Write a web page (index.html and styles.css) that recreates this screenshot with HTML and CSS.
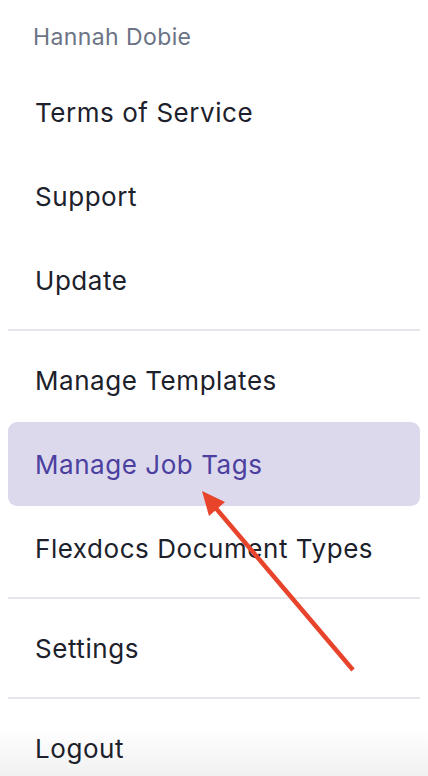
FILE: index.html
```html
<!DOCTYPE html>
<html>
<head>
<meta charset="utf-8">
<link rel="stylesheet" href="styles.css">
</head>
<body>
<nav class="menu">
  <div class="user">Hannah Dobie</div>
  <a class="item">Terms of Service</a>
  <a class="item">Support</a>
  <a class="item">Update</a>
  <hr class="sep">
  <a class="item">Manage Templates</a>
  <a class="item active">Manage Job Tags</a>
  <a class="item">Flexdocs Document Types</a>
  <hr class="sep">
  <a class="item">Settings</a>
  <hr class="sep">
  <a class="item">Logout</a>
</nav>
<svg class="arrow" width="428" height="776" viewBox="0 0 428 776">
  <line x1="353" y1="670" x2="214" y2="506" stroke="#e8432b" stroke-width="4.5" stroke-linecap="butt"/>
  <polygon points="202,491 225,502 209,516" fill="#e8432b"/>
</svg>
</body>
</html>
```
FILE: styles.css
```css
html, body {
  margin: 0;
  padding: 0;
  width: 428px;
  height: 776px;
  overflow: hidden;
}
body {
  font-family: Inter, "Noto Sans", sans-serif;
  position: relative;
  background: linear-gradient(to bottom, #ffffff 0px, #ffffff 728px, #f1f1f1 776px);
}
.menu {
  display: flex;
  flex-direction: column;
  padding: 0 8px;
}
.user {
  height: 70px;
  display: flex;
  align-items: center;
  padding-left: 25px;
  padding-top: 4px;
  box-sizing: border-box;
  font-size: 23px;
  color: #6b7385;
  letter-spacing: 0.4px;
}
.item {
  height: 84px;
  display: flex;
  align-items: center;
  padding-left: 27px;
  font-size: 26px;
  letter-spacing: 0.55px;
  color: #1c212b;
  border-radius: 9px;
}
.item.active {
  background: #dcd9ec;
  color: #4b40a0;
}
.sep {
  border: 0;
  height: 2px;
  background: #e3e6ea;
  margin: 7px 0;
}
.arrow {
  position: absolute;
  left: 0;
  top: 0;
}
```
